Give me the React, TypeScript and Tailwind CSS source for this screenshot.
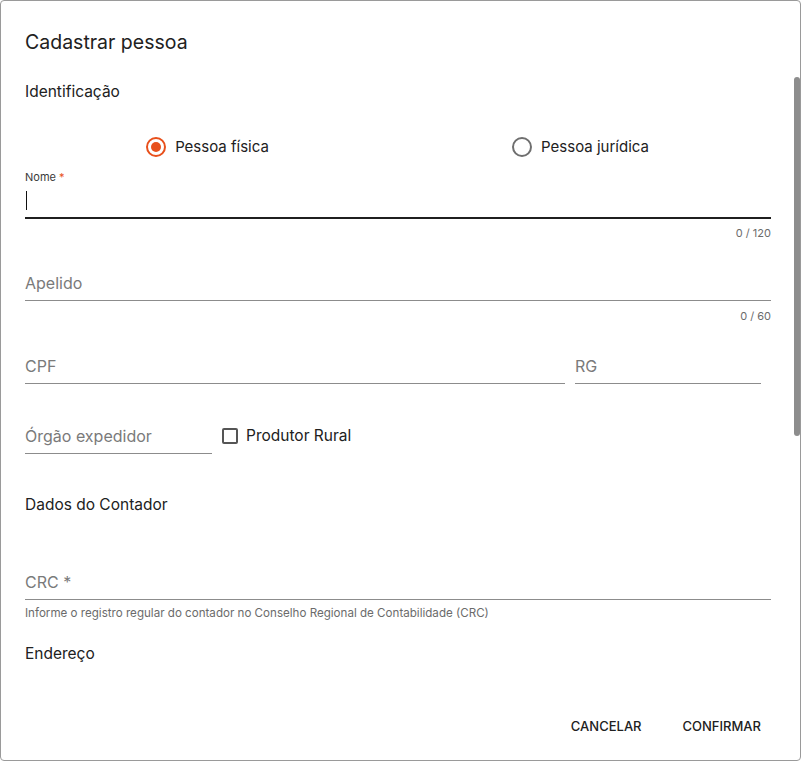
import React from 'react';

const font = { fontFamily: 'Inter, "Noto Sans", sans-serif' };

function Radio({ checked, label }: { checked?: boolean; label: string }) {
  return (
    <label className="flex items-center gap-[9px] cursor-pointer">
      <span
        className={
          checked
            ? 'flex size-[20px] items-center justify-center rounded-full border-2 border-[#e8501c]'
            : 'flex size-[20px] items-center justify-center rounded-full border-2 border-[#6f6f6f]'
        }
      >
        {checked && <span className="size-[10px] rounded-full bg-[#e8501c]" />}
      </span>
      <span className="text-[15px] leading-6 text-[#212121]">{label}</span>
    </label>
  );
}

function Field({ placeholder, className = '' }: { placeholder: string; className?: string }) {
  return (
    <div className={`border-b border-[#8c8c8c] pb-[5px] ${className}`}>
      <div className="text-[16px] leading-6 text-[#7a7a7a]">{placeholder}</div>
    </div>
  );
}

function Counter({ text, className = '' }: { text: string; className?: string }) {
  return <div className={`text-right text-[11px] leading-[14px] text-[#6b6b6b] ${className}`}>{text}</div>;
}

export default function App() {
  return (
    <div className="h-[761px] w-[802px] bg-white" style={font}>
      <div className="relative flex h-[761px] w-[801px] flex-col overflow-hidden rounded-[4px] border border-[#9a9a9a] bg-white">
        {/* scroll thumb */}
        <div className="absolute right-0 top-[76px] h-[359px] w-[6px] rounded-[3px] bg-[#8d8d8d]" />

        <div className="flex-1 overflow-hidden pl-[24px] pr-[29px]">
          <h2 className="mt-[27px] text-[19.5px] leading-[28px] text-[#212121]">Cadastrar pessoa</h2>

          <div className="mt-[24px] text-[15.5px] leading-6 text-[#212121]">Identificação</div>

          <div className="mt-[31px] grid grid-cols-2">
            <div className="flex justify-center pr-[8px]">
              <Radio checked label="Pessoa física" />
            </div>
            <div className="flex justify-center pr-[8px]">
              <Radio label="Pessoa jurídica" />
            </div>
          </div>

          {/* Nome */}
          <div className="mt-[11px] text-[11px] leading-[14px] text-[#3a3a3a]">
            Nome <span className="text-[#e8501c]">*</span>
          </div>
          <div className="flex h-[35px] items-center border-b-2 border-[#1f1f1f]">
            <div className="ml-[1px] h-[19px] w-[1px] bg-[#111]" />
          </div>
          <Counter text="0 / 120" className="mt-[7px]" />

          <Field placeholder="Apelido" className="mt-[31px]" />
          <Counter text="0 / 60" className="mt-[8px]" />

          <div className="mt-[31px] flex">
            <Field placeholder="CPF" className="w-[540px]" />
            <Field placeholder="RG" className="ml-[10px] w-[186px]" />
          </div>

          <div className="mt-[40px] flex items-start">
            <Field placeholder="Órgão expedidor" className="w-[187px]" />
            <label className="ml-[10px] flex h-6 items-center gap-[8px]">
              <span className="size-[16px] rounded-[2px] border-2 border-[#555]" />
              <span className="text-[15.5px] leading-6 text-[#212121]">Produtor Rural</span>
            </label>
          </div>

          <div className="mt-[39px] text-[15.5px] leading-6 text-[#212121]">Dados do Contador</div>

          <Field placeholder="CRC *" className="mt-[53px]" />
          <div className="mt-[6px] text-[11.6px] leading-[14px] text-[#6b6b6b]">
            Informe o registro regular do contador no Conselho Regional de Contabilidade (CRC)
          </div>

          <div className="mt-[22px] text-[15.5px] leading-6 text-[#212121]">Endereço</div>
        </div>

        <div className="flex justify-end gap-[25px] pb-[15px] pr-[31px]">
          <button className="h-[36px] px-2 text-[13px] font-medium uppercase text-[#212121]">Cancelar</button>
          <button className="h-[36px] px-2 text-[13px] font-medium uppercase text-[#212121]">Confirmar</button>
        </div>
      </div>
    </div>
  );
}
